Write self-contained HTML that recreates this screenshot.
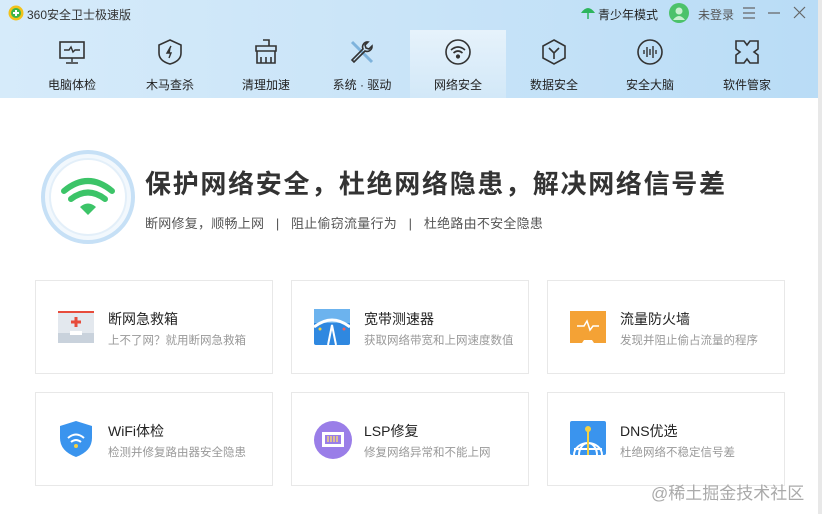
<!DOCTYPE html>
<html><head><meta charset="utf-8"><style>
*{margin:0;padding:0;box-sizing:border-box}
body{width:822px;height:514px;overflow:hidden;background:#fff;font-family:"Liberation Sans","Noto Sans CJK SC",sans-serif;position:relative}
.hdr{position:absolute;left:0;top:0;width:818px;height:98px;background:linear-gradient(90deg,#d6ebfa,#c9e4f8 50%,#b9dcf6)}
.edge{position:absolute;left:818px;top:0;width:4px;height:514px;background:#e8e8e8}
.t{position:absolute;font-size:12px;color:#333;white-space:nowrap}
.nav{position:absolute;top:30px;width:96px;height:68px;text-align:center}
.nav svg{position:absolute;left:34px;top:8px}
.nav span{position:absolute;left:0;right:0;top:46px;font-size:12px;color:#222}
.act{background:linear-gradient(180deg,#e6f2fb,#d2e8f8)}
.card{position:absolute;width:238px;height:94px;border:1px solid #e8e8e8;background:#fff}
.card .ic{position:absolute;left:22px;top:28px}
.card b{position:absolute;left:72px;top:28px;font-weight:normal;font-size:14px;color:#222}
.card i{position:absolute;left:72px;top:51px;font-style:normal;font-size:11.5px;color:#999}
</style></head><body>
<div class="hdr"></div>
<div class="edge"></div>
<svg style="position:absolute;left:8px;top:5px" width="16" height="16"><circle cx="8" cy="8" r="7.5" fill="#f2c21a"/><circle cx="8" cy="8" r="5" fill="#3bb54a"/><path d="M8 5v6M5 8h6" stroke="#fff" stroke-width="2"/></svg>
<div class="t" style="left:27px;top:6px;color:#333">360安全卫士极速版</div>
<svg style="position:absolute;left:580px;top:6px" width="16" height="14"><path d="M1 7Q8-3 15 7Z" fill="#2db55d"/><path d="M8 7v6" stroke="#2db55d" stroke-width="1.5"/></svg>
<div class="t" style="left:598px;top:6px;color:#222">青少年模式</div>
<svg style="position:absolute;left:669px;top:3px" width="20" height="20"><circle cx="10" cy="10" r="10" fill="#4cc26a"/><circle cx="10" cy="8" r="3.5" fill="#c9f0d0"/><path d="M4 17Q10 9 16 17" fill="#c9f0d0"/></svg>
<div class="t" style="left:698px;top:6px;color:#555">未登录</div>
<svg style="position:absolute;left:742px;top:6px" width="70" height="14"><path d="M1 2h12M1 7h12M1 12h12M26 7h12M52 1l11 11M63 1l-11 11" stroke="#666" stroke-width="1.2" fill="none"/></svg>

<div class="nav" style="left:24px"><svg width="28" height="28" fill="none" stroke="#333" stroke-width="1.6"><rect x="2" y="4" width="24" height="16"/><path d="M14 20v4M8 25h12M6 12h5l2-3 2 5 2-2h5" stroke-width="1.4"/></svg><span>电脑体检</span></div>
<div class="nav" style="left:122px"><svg width="28" height="28" fill="none" stroke="#333" stroke-width="1.6"><path d="M14 2l11 5v8q0 8-11 11Q3 23 3 15V7z"/><path d="M15 8l-4 7h4l-2 5" fill="#333" stroke-width="1.4"/></svg><span>木马查杀</span></div>
<div class="nav" style="left:218px"><svg width="28" height="28" fill="none" stroke="#333" stroke-width="1.6"><path d="M11 2h6v6M4 8h20v5H4zM5 13v12h18V13M9 25v-6M14 25v-6M19 25v-6"/></svg><span>清理加速</span></div>
<div class="nav" style="left:314px"><svg width="28" height="28" fill="none" stroke-width="1.6"><path d="M4 4l20 20" stroke="#7eb3dc" stroke-width="3"/><path d="M24 8a5 5 0 0 1-7 5L6 24l-2-2 11-11a5 5 0 0 1 5-7l-3 3 1 3 3 1z" stroke="#333"/></svg><span>系统 · 驱动</span></div>
<div class="nav act" style="left:410px"><svg width="28" height="28" fill="none" stroke="#333" stroke-width="1.6"><circle cx="14" cy="14" r="12"/><path d="M7 12q7-6 14 0M9.5 15q4.5-4 9 0"/><circle cx="14" cy="18.5" r="1.3" fill="#333"/></svg><span>网络安全</span></div>
<div class="nav" style="left:506px"><svg width="28" height="28" fill="none" stroke="#333" stroke-width="1.6"><path d="M14 2l11 6v12l-11 6-11-6V8z"/><path d="M9 10l5 5 5-5M14 15v6"/></svg><span>数据安全</span></div>
<div class="nav" style="left:602px"><svg width="28" height="28" fill="none" stroke="#333" stroke-width="1.6"><circle cx="14" cy="14" r="12"/><path d="M8 12v4M11 9v10M14 11v6M17 8v12M20 12v4" stroke-width="1.4"/></svg><span>安全大脑</span></div>
<div class="nav" style="left:699px"><svg width="28" height="28" fill="none" stroke="#333" stroke-width="1.6"><path d="M3 3h8l3 4 3-4h8v8l-4 3 4 3v8h-8l-3-4-3 4H3v-8l4-3-4-3z"/></svg><span>软件管家</span></div>

<svg style="position:absolute;left:40px;top:149px" width="96" height="96"><circle cx="48" cy="48" r="45" fill="#f2f8fd" stroke="#c6e0f6" stroke-width="4"/><circle cx="48" cy="48" r="38" fill="#fff" stroke="#e3eff9" stroke-width="2"/><path d="M24 42q24-20 48 0M31 50q17-13 34 0" stroke="#3cc468" stroke-width="6" fill="none" stroke-linecap="round"/><path d="M40 58q8-7 16 0L48 66z" fill="#3cc468"/></svg>
<div class="t" style="left:145px;top:164px;font-size:26px;font-weight:bold;color:#333;letter-spacing:1.7px">保护网络安全，杜绝网络隐患，解决网络信号差</div>
<div class="t" style="left:145px;top:213px;font-size:13px;color:#555;letter-spacing:0.25px">断网修复，顺畅上网 &nbsp;&nbsp;| &nbsp;&nbsp;阻止偷窃流量行为 &nbsp;&nbsp;| &nbsp;&nbsp;杜绝路由不安全隐患</div>

<div class="card" style="left:35px;top:280px"><svg class="ic" width="36" height="36"><rect x="0" y="2" width="36" height="32" fill="#e3e8ee"/><rect x="0" y="2" width="36" height="2" fill="#e74c3c"/><path d="M18 8v10M13 13h10" stroke="#e74c3c" stroke-width="3"/><rect x="0" y="24" width="36" height="10" fill="#c9d2dc"/><rect x="12" y="22" width="12" height="4" fill="#fff"/></svg><b>断网急救箱</b><i>上不了网？就用断网急救箱</i></div>
<div class="card" style="left:291px;top:280px"><svg class="ic" width="36" height="36"><rect x="0" y="0" width="36" height="36" rx="2" fill="#2f88e0"/><rect x="0" y="0" width="36" height="14" fill="#6cb3ee"/><path d="M0 18q18-14 36 0" stroke="#fff" stroke-width="3" fill="none"/><path d="M14 36l4-20 4 20" stroke="#fff" stroke-width="2" fill="none"/><circle cx="6" cy="20" r="1.5" fill="#f5d142"/><circle cx="30" cy="20" r="1.5" fill="#f06060"/></svg><b>宽带测速器</b><i>获取网络带宽和上网速度数值</i></div>
<div class="card" style="left:547px;top:280px"><svg class="ic" width="36" height="36"><path d="M0 2h36v32H24l-2-3h-8l-2 3H0z" fill="#f4a235"/><path d="M7 17h7l3-5 3 9 3-4h6" stroke="#fff" stroke-width="1.5" fill="none"/></svg><b>流量防火墙</b><i>发现并阻止偷占流量的程序</i></div>
<div class="card" style="left:35px;top:392px"><svg class="ic" width="36" height="36"><path d="M18 0l16 5v12q0 13-16 19Q2 30 2 17V5z" fill="#3a94ee"/><path d="M10 17q8-7 16 0M13 21q5-4 10 0" stroke="#fff" stroke-width="2" fill="none"/><circle cx="18" cy="25" r="2" fill="#f5d142"/></svg><b>WiFi体检</b><i>检测并修复路由器安全隐患</i></div>
<div class="card" style="left:291px;top:392px"><svg class="ic" width="38" height="38"><circle cx="19" cy="19" r="19" fill="#9a7ee8"/><rect x="8" y="11" width="22" height="15" fill="#fff"/><rect x="11" y="14" width="16" height="9" fill="#9a7ee8"/><path d="M14 15v6M17 15v6M20 15v6M23 15v6" stroke="#f1d37a" stroke-width="1.5"/></svg><b>LSP修复</b><i>修复网络异常和不能上网</i></div>
<div class="card" style="left:547px;top:392px"><svg class="ic" width="36" height="36"><rect x="0" y="0" width="36" height="34" rx="2" fill="#3a94ee"/><path d="M4 34a14 12 0 0 1 28 0M9 34a9 12 0 0 1 18 0M4 28h28" stroke="#fff" stroke-width="2" fill="none"/><path d="M18 8v26" stroke="#f5d142" stroke-width="2"/><circle cx="18" cy="8" r="3" fill="#f5d142"/></svg><b>DNS优选</b><i>杜绝网络不稳定信号差</i></div>
<div class="t" style="left:651px;top:479px;font-size:17px;color:#aaa">@稀土掘金技术社区</div>
</body></html>
